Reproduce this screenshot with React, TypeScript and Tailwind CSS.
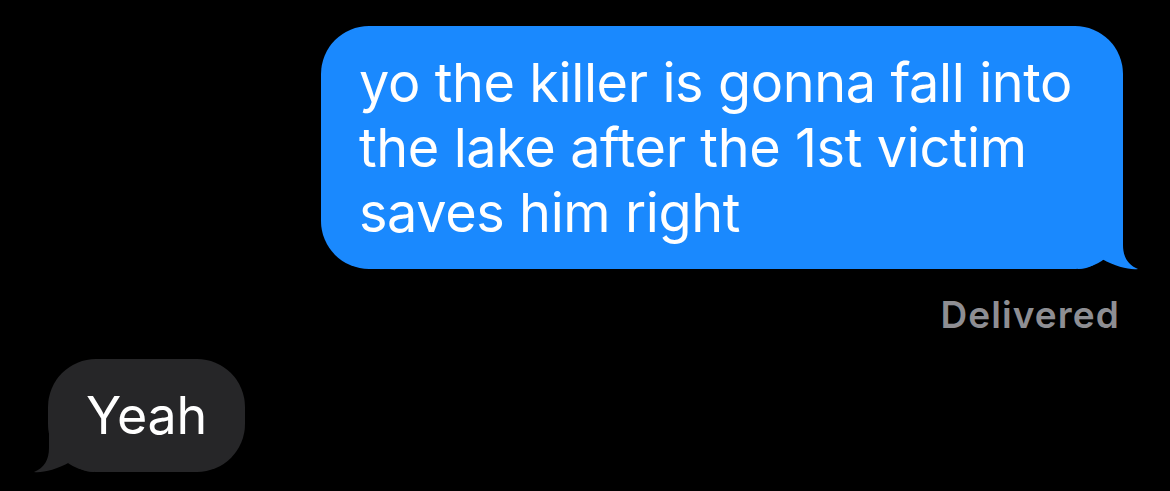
const Tail = ({ color, flip }: { color: string; flip?: boolean }) => (
  <svg
    width="62"
    height="50"
    viewBox="0 0 62 50"
    className={flip ? 'absolute bottom-0 left-[-16px] -scale-x-100' : 'absolute bottom-0 right-[-17px]'}
    style={{ overflow: 'visible' }}
  >
    <path d="M0,0 H45 V26 C45,38 50,46 60,50 C52,51 38,48 24,40 C18,45 10,50 0,50 Z" fill={color} />
  </svg>
)

export default function App() {
  return (
    <div className="min-h-[491px] w-[1170px] bg-black text-white" style={{ fontFamily: 'Inter, "Noto Sans", sans-serif' }}>
      <div className="flex justify-end pr-[47px] pt-[26px]">
        <div className="relative w-[802px] rounded-[48px] bg-[#1a89fe] pl-[38px] py-[24px] text-[54px] leading-[65px] tracking-[-0.4px]">
          <Tail color="#1a89fe" />
          <div className="relative whitespace-nowrap">
            yo the killer is gonna fall into
            <br />
            the lake after the 1st victim
            <br />
            saves him right
          </div>
        </div>
      </div>
      <div className="flex justify-end pr-[50px] pt-[24px]">
        <span className="text-[37px] font-semibold leading-[44px] tracking-[1.1px] text-[#8e8e93]">Delivered</span>
      </div>
      <div className="flex pl-[48px] pt-[22px]">
        <div className="relative rounded-[48px] bg-[#262628] pl-[38px] pr-[38px] py-[24px] text-[52px] leading-[65px] tracking-[-0.3px]">
          <Tail color="#262628" flip />
          <div className="relative">Yeah</div>
        </div>
      </div>
    </div>
  )
}
